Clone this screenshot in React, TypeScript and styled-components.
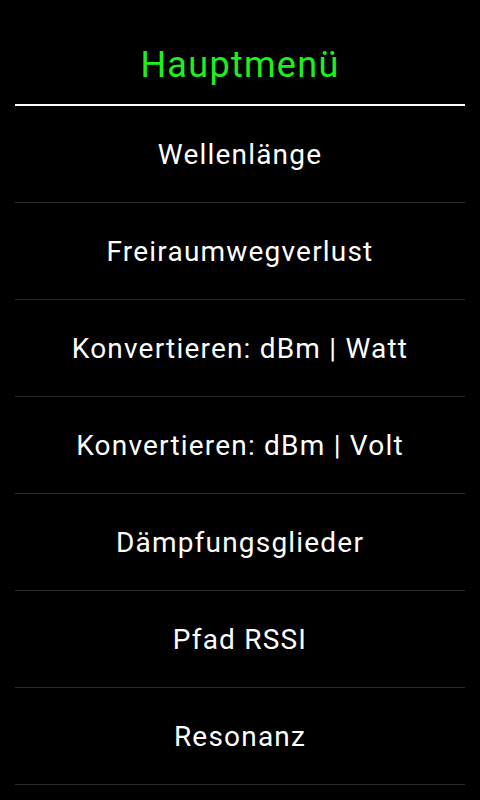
import React from 'react'
import styled, { createGlobalStyle } from 'styled-components'

const GlobalStyle = createGlobalStyle`
  html, body {
    margin: 0;
    padding: 0;
    background: #000;
  }
  body {
    font-family: Roboto, "Noto Sans", "Liberation Sans", sans-serif;
  }
`

const StyledScreen = styled.div`
  width: 480px;
  height: 800px;
  background: #000;
  overflow: hidden;
  padding: 0 15px;
  box-sizing: border-box;
`

const StyledTitle = styled.h1`
  margin: 0;
  padding: 43px 0 17px;
  font-size: 36px;
  line-height: 44px;
  font-weight: 400;
  letter-spacing: 1.3px;
  text-align: center;
  color: #1ef01e;
`

const StyledRule = styled.div`
  height: 2px;
  background: #fff;
`

const StyledList = styled.ul`
  list-style: none;
  margin: 0;
  padding: 0;
`

const StyledItem = styled.li`
  height: 96px;
  display: flex;
  align-items: center;
  justify-content: center;
  border-bottom: 1px solid #2b2b2b;
  color: #fff;
  font-size: 28px;
  letter-spacing: 1.2px;
  cursor: pointer;
`

const items = [
  'Wellenlänge',
  'Freiraumwegverlust',
  'Konvertieren: dBm | Watt',
  'Konvertieren: dBm | Volt',
  'Dämpfungsglieder',
  'Pfad RSSI',
  'Resonanz',
]

export default function App() {
  return (
    <>
      <GlobalStyle />
      <StyledScreen>
        <StyledTitle>Hauptmenü</StyledTitle>
        <StyledRule />
        <StyledList>
          {items.map((item) => (
            <StyledItem key={item}>{item}</StyledItem>
          ))}
        </StyledList>
      </StyledScreen>
    </>
  )
}
